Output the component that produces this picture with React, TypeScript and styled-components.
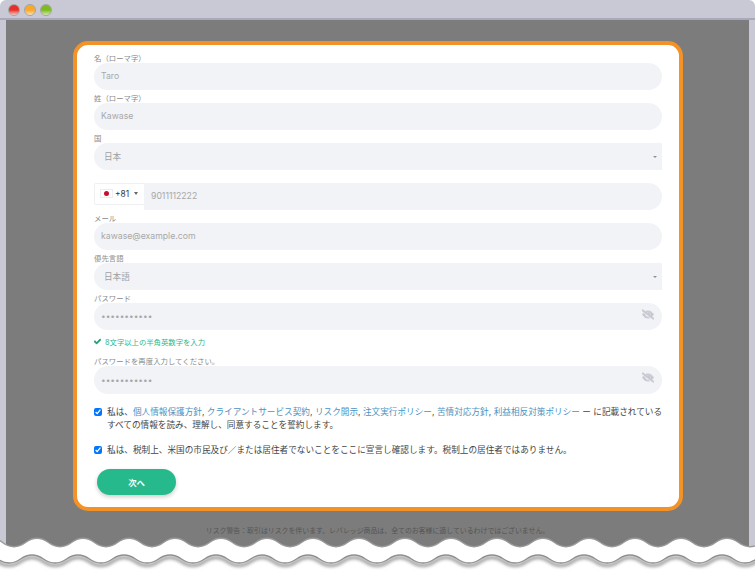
import React from "react";
import styled, { createGlobalStyle } from "styled-components";
import { FaCheck, FaEyeSlash } from "react-icons/fa";

const GlobalStyle = createGlobalStyle`
  html, body {
    margin: 0;
    padding: 0;
    height: 100%;
    overflow: hidden;
    background: #fff;
  }
  * {
    box-sizing: border-box;
  }
`;

const FONT = `Inter, "Noto Sans CJK JP", sans-serif`;

const wavePath = (crest: number, mid: number, amp: number) => {
  const half = 23;
  let x = crest - half / 2 - 46 * 2;
  let d = `M ${x} ${mid} Q ${x + half / 2} ${mid - amp * 2} ${x + half} ${mid}`;
  while (x < 800) {
    x += half;
    d += ` T ${x + half} ${mid}`;
  }
  return d;
};

const TOP_WAVE = wavePath(37, 7.5, 4.25);
const BOTTOM_WAVE = wavePath(32, 24, 4);

const fields = [
  { label: "名（ローマ字）", value: "Taro" },
  { label: "姓（ローマ字）", value: "Kawase" },
];

export default function App() {
  return (
    <>
      <GlobalStyle />
      <Window>
        <TitleBar>
          <Light $top="#e8302a" $bottom="#f6c9c0" />
          <Light $top="#f7a92c" $bottom="#fbe0b4" />
          <Light $top="#7cbc1e" $bottom="#d4e8b0" />
        </TitleBar>
        <Stage>
          <Card>
            {fields.map((f) => (
              <Row key={f.label}>
                <Label>{f.label}</Label>
                <Input readOnly value={f.value} />
              </Row>
            ))}
            <Row>
              <Label>国</Label>
              <SelectBox>
                日本
                <Caret />
              </SelectBox>
            </Row>
            <Row>
              <Label />
              <PhoneField>
                <CountryPicker>
                  <Flag>
                    <FlagDot />
                  </Flag>
                  +81
                  <DialCaret />
                </CountryPicker>
                <PhoneInput readOnly value="9011112222" />
              </PhoneField>
            </Row>
            <Row>
              <Label>メール</Label>
              <Input readOnly value="kawase@example.com" />
            </Row>
            <Row>
              <Label>優先言語</Label>
              <SelectBox>
                日本語
                <Caret />
              </SelectBox>
            </Row>
            <PasswordRow>
              <Label>パスワード</Label>
              <PasswordWrap>
                <PasswordInput type="password" readOnly value="12345678901" />
                <EyeIcon />
              </PasswordWrap>
            </PasswordRow>
            <Hint>
              <FaCheck />
              8文字以上の半角英数字を入力
            </Hint>
            <Row>
              <Label>パスワードを再度入力してください。</Label>
              <PasswordWrap>
                <PasswordInput type="password" readOnly value="12345678901" />
                <EyeIcon />
              </PasswordWrap>
            </Row>
            <Agreement>
              <CheckBox type="checkbox" readOnly checked />
              <AgreementText>
                私は、<TermLink>個人情報保護方針</TermLink>, <TermLink>クライアントサービス契約</TermLink>,{" "}
                <TermLink>リスク開示</TermLink>, <TermLink>注文実行ポリシー</TermLink>,{" "}
                <TermLink>苦情対応方針</TermLink>, <TermLink>利益相反対策ポリシー</TermLink> ー に記載されている
                <br />
                すべての情報を読み、理解し、同意することを誓約します。
              </AgreementText>
            </Agreement>
            <TaxAgreement>
              <CheckBox type="checkbox" readOnly checked />
              <AgreementText>私は、税制上、米国の市民及び／または居住者でないことをここに宣言し確認します。税制上の居住者ではありません。</AgreementText>
            </TaxAgreement>
            <NextButton>次へ</NextButton>
          </Card>
          <RiskNote>リスク警告：取引はリスクを伴います。レバレッジ商品は、全てのお客様に適しているわけではございません。</RiskNote>
        </Stage>
        <TornEdge viewBox="0 0 755 40" aria-hidden="true">
          <defs>
            <filter id="tornShadow" x="-5%" y="-50%" width="110%" height="250%">
              <feGaussianBlur stdDeviation="1.7" />
            </filter>
            <clipPath id="belowBottomWave">
              <path d={`${BOTTOM_WAVE} L 900 60 L -100 60 Z`} />
            </clipPath>
          </defs>
          <path d={`${TOP_WAVE} L 900 60 L -100 60 Z`} fill="#fff" />
          <g clipPath="url(#belowBottomWave)">
            <path d={BOTTOM_WAVE} transform="translate(0 2.5)" fill="none" stroke="#a8a8a8" strokeWidth="3.5" filter="url(#tornShadow)" />
          </g>
          <path d={TOP_WAVE} fill="none" stroke="#9a9a9a" strokeWidth="1.3" />
          <path d={BOTTOM_WAVE} fill="none" stroke="#8f8f8f" strokeWidth="1.3" />
        </TornEdge>
      </Window>
    </>
  );
}

const Window = styled.div`
  position: relative;
  width: 755px;
  height: 575px;
  overflow: hidden;
  display: flex;
  flex-direction: column;
  background: #c9c9d6;
  border-radius: 6px 6px 0 0;
  font-family: ${FONT};
`;

const TitleBar = styled.div`
  flex: none;
  height: 20px;
  display: flex;
  align-items: center;
  gap: 4px;
  padding: 2px 0 0 8px;
  border-bottom: 2px solid #a9a9bb;
`;

const Light = styled.span<{ $top: string; $bottom: string }>`
  width: 12px;
  height: 12px;
  border-radius: 50%;
  border: 1px solid #a5a5a5;
  background: linear-gradient(${(p) => p.$top} 50%, ${(p) => p.$bottom});
`;

const Stage = styled.div`
  flex: 1;
  margin: 0 6px;
  padding-top: 21px;
  background: #7c7c7c;
  display: flex;
  flex-direction: column;
  align-items: center;
`;

const Card = styled.div`
  width: 610px;
  height: 470px;
  margin-left: 1px;
  padding: 9.5px 17px 0;
  background: #fff;
  border: 4px solid #f29227;
  border-radius: 15px;
`;

const Row = styled.div`
  margin-bottom: 4.5px;
`;

const PasswordRow = styled.div`
  margin-bottom: 0;
`;

const Label = styled.div`
  height: 8px;
  font-size: 7.4px;
  line-height: 8px;
  color: #8a8a8a;
`;

const Input = styled.input`
  display: block;
  width: 100%;
  height: 27.5px;
  padding: 0 7px;
  border: 0;
  outline: 0;
  border-radius: 14px;
  background: #f2f3f7;
  font-family: ${FONT};
  font-size: 8.7px;
  color: #a8a8a8;
`;

const PasswordInput = styled(Input)`
  font-size: 8.3px;
`;

const SelectBox = styled.div`
  position: relative;
  height: 27.5px;
  display: flex;
  align-items: center;
  padding-left: 10px;
  border-radius: 14px 0 0 14px;
  background: #f2f3f7;
  font-size: 8.6px;
  color: #a0a0a0;
`;

const Caret = styled.span`
  position: absolute;
  right: 5px;
  top: 13px;
  border-left: 2px solid transparent;
  border-right: 2px solid transparent;
  border-top: 2.5px solid #8f8f99;
`;

const PhoneField = styled.div`
  display: flex;
  height: 27.5px;
`;

const CountryPicker = styled.div`
  flex: none;
  width: 50px;
  height: 22px;
  display: flex;
  align-items: center;
  padding-left: 5px;
  background: #fff;
  border: 1px solid #f0f0f2;
  border-right: 0;
  border-radius: 2px 0 0 2px;
  font-size: 8.4px;
  color: #333;
`;

const Flag = styled.span`
  width: 13px;
  height: 9px;
  margin-right: 2px;
  display: flex;
  align-items: center;
  justify-content: center;
  background: #fff;
  border: 1px solid #eee;
`;

const FlagDot = styled.span`
  width: 5px;
  height: 5px;
  border-radius: 50%;
  background: #c8102e;
`;

const DialCaret = styled.span`
  margin-left: 5px;
  border-left: 2.5px solid transparent;
  border-right: 2.5px solid transparent;
  border-top: 3px solid #666;
`;

const PhoneInput = styled(Input)`
  flex: 1;
  padding-left: 7px;
  border-radius: 0 14px 14px 0;
`;

const PasswordWrap = styled.div`
  position: relative;
`;

const EyeIcon = styled(FaEyeSlash)`
  position: absolute;
  right: 8px;
  top: 6px;
  width: 12px;
  height: 11px;
  color: #c6c9d1;
  stroke: currentColor;
  stroke-width: 44px;
`;

const Hint = styled.div`
  height: 28px;
  display: flex;
  align-items: center;
  gap: 4px;
  padding-bottom: 6px;
  font-size: 7.35px;
  color: #27b98b;

  svg {
    width: 7px;
    height: 7px;
    color: #1f9e77;
    stroke: currentColor;
    stroke-width: 40px;
  }
`;

const Agreement = styled.label`
  display: flex;
  gap: 5px;
  margin-top: 12px;
  font-size: 8.64px;
  line-height: 13.5px;
  color: #444;
`;

const AgreementText = styled.span`
  white-space: nowrap;
`;

const TaxAgreement = styled(Agreement)`
  margin-top: 11px;
`;

const CheckBox = styled.input`
  flex: none;
  width: 8px;
  height: 8px;
  margin: 2.5px 0 0;
`;

const TermLink = styled.a`
  color: #4b93c3;
`;

const NextButton = styled.button`
  display: block;
  width: 79px;
  height: 26px;
  margin: 12px 0 0 3px;
  padding: 0;
  border: 0;
  border-radius: 13px;
  background: #25b98c;
  box-shadow: 0 2px 4px rgba(0, 0, 0, 0.2);
  font-family: ${FONT};
  font-size: 8.4px;
  font-weight: 700;
  color: #fff;
`;

const RiskNote = styled.div`
  margin-top: 15.5px;
  font-size: 6.9px;
  line-height: 8px;
  color: #555;
`;

const TornEdge = styled.svg`
  position: absolute;
  left: 0;
  bottom: 0;
  width: 755px;
  height: 40px;
  display: block;
`;
